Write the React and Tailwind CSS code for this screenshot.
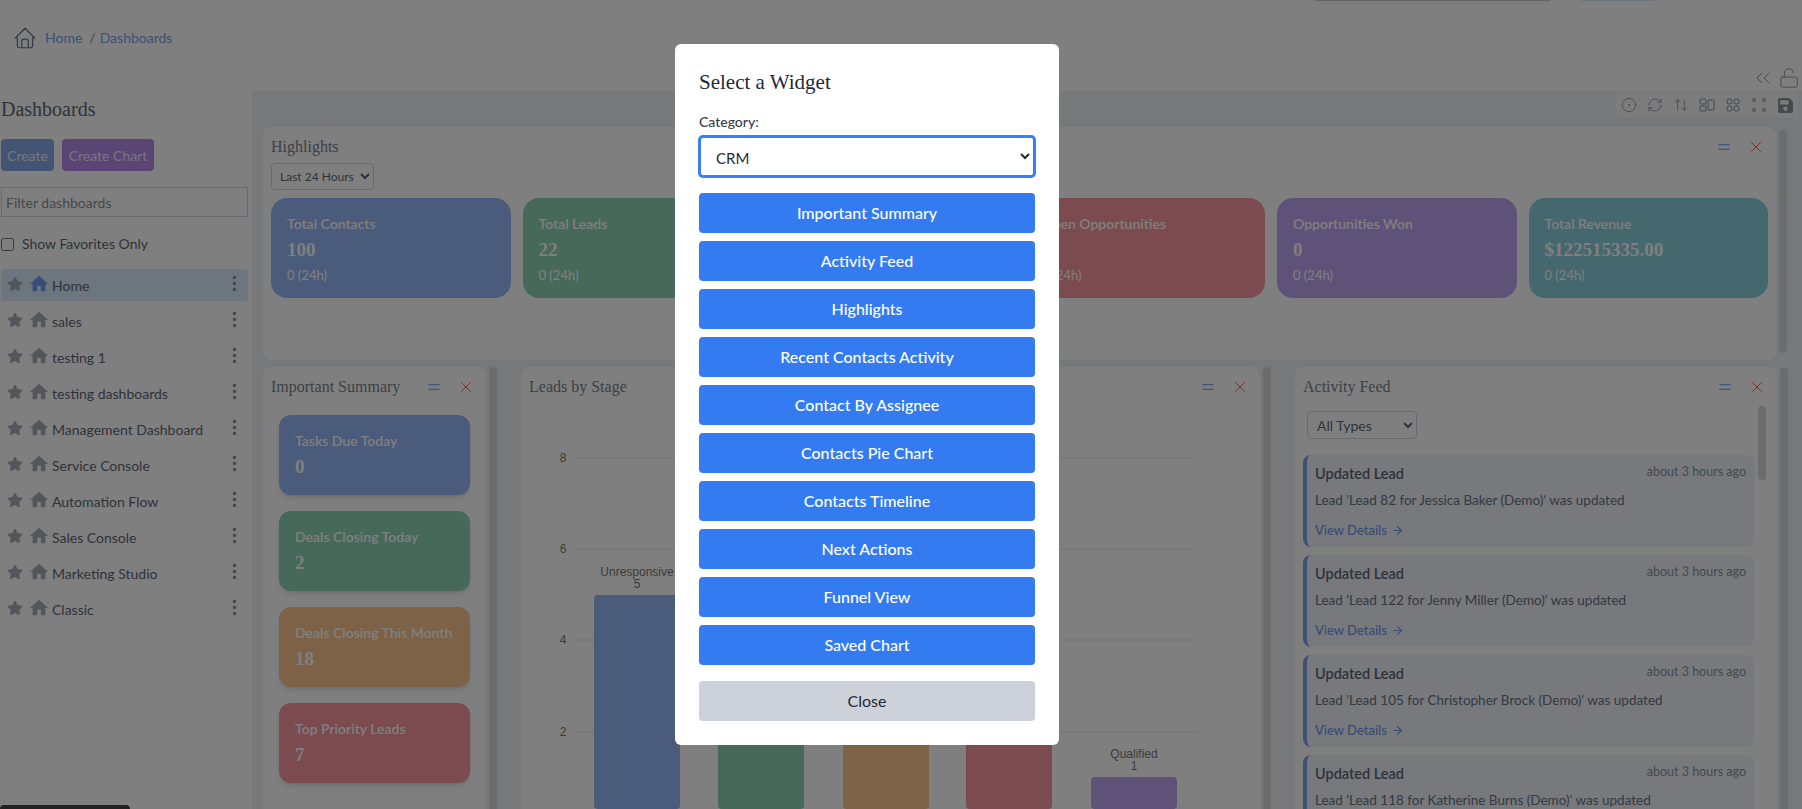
import { useState } from "react"
import {
  FaStar,
  FaSave,
} from "react-icons/fa"
import { MdHome } from "react-icons/md"
import { BsThreeDotsVertical } from "react-icons/bs"
import { TbHome } from "react-icons/tb"
import {
  LuChevronsLeft,
  LuLockOpen,
  LuCircleDot,
  LuRefreshCw,
  LuArrowUpDown,
  LuEqual,
  LuX,
  LuArrowRight,
} from "react-icons/lu"

const dashboards = [
  "Home",
  "sales",
  "testing 1",
  "testing dashboards",
  "Management Dashboard",
  "Service Console",
  "Automation Flow",
  "Sales Console",
  "Marketing Studio",
  "Classic",
]

const highlights = [
  { title: "Total Contacts", value: "100", bg: "bg-[#95b7f6]" },
  { title: "Total Leads", value: "22", bg: "bg-[#8cd2b4]" },
  { title: "Open Leads", value: "22", bg: "bg-[#fac490]" },
  { title: "Open Opportunities", value: "0", bg: "bg-[#f6969e]" },
  { title: "Opportunities Won", value: "0", bg: "bg-[#bca4f0]" },
  { title: "Total Revenue", value: "$122515335.00", bg: "bg-[#8ad0de]" },
]

const summary = [
  { title: "Tasks Due Today", value: "0", bg: "bg-[#95b7f6]" },
  { title: "Deals Closing Today", value: "2", bg: "bg-[#8cd2b4]" },
  { title: "Deals Closing This Month", value: "18", bg: "bg-[#fac490]" },
  { title: "Top Priority Leads", value: "7", bg: "bg-[#f6969e]" },
]

const feed = [
  "Lead 'Lead 82 for Jessica Baker (Demo)' was updated",
  "Lead 'Lead 122 for Jenny Miller (Demo)' was updated",
  "Lead 'Lead 105 for Christopher Brock (Demo)' was updated",
  "Lead 'Lead 118 for Katherine Burns (Demo)' was updated",
]

const widgets = [
  "Important Summary",
  "Activity Feed",
  "Highlights",
  "Recent Contacts Activity",
  "Contact By Assignee",
  "Contacts Pie Chart",
  "Contacts Timeline",
  "Next Actions",
  "Funnel View",
  "Saved Chart",
]

const serif = "font-['Liberation_Serif',serif]"

function PanelHeader({ title }) {
  return (
    <div className="flex h-9 items-center justify-between pl-2 pr-[11px] pt-[4px]">
      <h3 className={`${serif} text-[16px] text-[#7b828d]`}>{title}</h3>
      <div className="flex items-center gap-[14px]">
        <LuEqual className="text-[#5b8def]" size={18} strokeWidth={1.25} />
        <LuX className="text-[#ef5560]" size={18} strokeWidth={1.25} />
      </div>
    </div>
  )
}

function Scrollbar({ top = 3, height = 223 }) {
  return (
    <div className="w-[14px] shrink-0 pl-[3px]">
      <div className="w-2 rounded bg-[#d6d8d6]" style={{ marginTop: top, height }} />
    </div>
  )
}

function Sidebar() {
  return (
    <aside className="w-[252px] shrink-0 pl-px pr-1">
      <h2 className={`${serif} mt-[4px] text-[20px] leading-7 text-[#5f6773]`}>Dashboards</h2>
      <div className="mt-[16px] flex gap-2">
        <button className="h-8 w-[53px] rounded bg-[#86a8ea] text-[14px] text-white/80">Create</button>
        <button className="h-8 w-[92px] rounded bg-[#b58bea] text-[14px] text-white/80">Create Chart</button>
      </div>
      <input
        className="mt-4 h-[30px] w-full border border-[#d1d5db] px-1 text-[14px] placeholder:text-[#8b919b]"
        placeholder="Filter dashboards"
      />
      <label className="mt-[17px] flex items-center gap-2 text-[14px] leading-5 text-[#5f6773]">
        <input type="checkbox" className="m-0 h-[13px] w-[13px]" />
        Show Favorites Only
      </label>
      <ul className="mt-[15px] flex flex-col gap-1">
        {dashboards.map((name, i) => (
          <li
            key={name}
            className={`flex h-8 items-center rounded pl-[6px] pr-[4px] text-[14px] text-[#5f6773] ${i === 0 ? "bg-[#dbeafe]" : ""}`}
          >
            <FaStar className="-mt-[2px] text-[#a6acb5]" size={16} />
            <MdHome className={`-mt-[2px] ml-[5px] ${i === 0 ? "text-[#6f98ec]" : "text-[#a6acb5]"}`} size={22} />
            <span className="ml-[2px] flex-1 truncate">{name}</span>
            <BsThreeDotsVertical className="-mt-[3px] text-[#8b919b]" size={19} />
          </li>
        ))}
      </ul>
    </aside>
  )
}

function Toolbar() {
  let btn = "flex h-[26px] w-[26px] items-center justify-center bg-white/60 text-[#8b919b]"
  return (
    <div className="flex h-9 justify-end pr-1 pt-px">
      <div className={btn}><LuCircleDot size={16} strokeWidth={1.25} /></div>
      <div className={btn}><LuRefreshCw size={16} strokeWidth={1.25} /></div>
      <div className={btn}><LuArrowUpDown size={16} strokeWidth={1.25} /></div>
      <div className={btn}>
        <svg width="16" height="16" viewBox="0 0 16 16" fill="none" stroke="currentColor" strokeWidth="1">
          <rect x="1" y="2" width="6" height="5" rx="1" />
          <rect x="1" y="9" width="6" height="5" rx="1" />
          <rect x="9" y="3" width="6" height="10" rx="1" />
        </svg>
      </div>
      <div className={btn}>
        <svg width="16" height="16" viewBox="0 0 16 16" fill="none" stroke="currentColor" strokeWidth="1">
          <rect x="2" y="2" width="5" height="5" rx="2" />
          <rect x="9" y="2" width="5" height="5" rx="2" />
          <rect x="2" y="9" width="5" height="5" rx="2" />
          <rect x="9" y="9" width="5" height="5" rx="2" />
        </svg>
      </div>
      <div className={btn}>
        <svg width="16" height="16" viewBox="0 0 16 16" fill="none" stroke="currentColor" strokeWidth="1">
          <path d="M2 5V2h3M2 2l3 3M14 5V2h-3M14 2l-3 3M2 11v3h3M2 14l3-3M14 11v3h-3M14 14l-3-3" />
        </svg>
      </div>
      <div className={`${btn} rounded text-[#4b5563]`}><FaSave size={17} /></div>
    </div>
  )
}

function Highlights() {
  return (
    <div className="flex">
      <section className="h-[233px] w-[1513px] rounded-lg bg-white">
        <PanelHeader title="Highlights" />
        <div className="px-2">
          <select className="block h-[27px] w-[103px] rounded border border-[#d1d5db] bg-white pl-1 text-[12px] text-[#5f6773]" defaultValue="24">
            <option value="24">Last 24 Hours</option>
          </select>
          <div className="mt-2 grid grid-cols-6 gap-3">
            {highlights.map(c => (
              <div key={c.title} className={`h-[100px] rounded-2xl px-4 pt-[16px] text-white ${c.bg}`}>
                <div className="whitespace-nowrap text-[14px] font-semibold leading-5">{c.title}</div>
                <div className={`${serif} mt-[2px] text-[19px] font-bold leading-7`}>{c.value}</div>
                <div className="mt-[3px] text-[13px] leading-4">0 (24h)</div>
              </div>
            ))}
          </div>
        </div>
      </section>
      <Scrollbar />
    </div>
  )
}

function ImportantSummary() {
  return (
    <div className="flex">
      <section className="h-[500px] w-[223px] rounded-lg bg-white">
        <PanelHeader title="Important Summary" />
        <div className="mt-3 flex flex-col gap-4 px-4">
          {summary.map(c => (
            <div key={c.title} className={`h-20 rounded-xl px-4 pt-[16px] text-white shadow-md ${c.bg}`}>
              <div className="whitespace-nowrap text-[14px] font-semibold leading-5">{c.title}</div>
              <div className={`${serif} mt-[2px] text-[19px] font-bold leading-7`}>{c.value}</div>
            </div>
          ))}
        </div>
      </section>
      <Scrollbar top={0} height={500} />
    </div>
  )
}

function LeadsChart() {
  let ticks = [[8, 55], [6, 146], [4, 237], [2, 329]]
  let bars = [
    { x: 73, top: 192, fill: "#95b7f6" },
    { x: 197, top: 300, fill: "#8cd2b4" },
    { x: 322, top: 300, fill: "#fac490" },
    { x: 445, top: 300, fill: "#f6969e" },
    { x: 570, top: 374, fill: "#bca4f0" },
  ]
  return (
    <svg width="739" height="406" className="block font-['Liberation_Sans',sans-serif] text-[12px]">
      {ticks.map(([v, y]) => (
        <g key={v}>
          <line x1="54" x2="675" y1={y} y2={y} stroke="#e5e7eb" />
          <text x="42" y={y + 4} textAnchor="middle" fill="#777">{v}</text>
        </g>
      ))}
      {bars.map(b => (
        <rect key={b.x} x={b.x} y={b.top} width="86" height={406 - b.top} rx="4" fill={b.fill} />
      ))}
      <text x="116" y="173" textAnchor="middle" fill="#777">Unresponsive</text>
      <text x="116" y="185" textAnchor="middle" fill="#777">5</text>
      <text x="613" y="355" textAnchor="middle" fill="#777">Qualified</text>
      <text x="613" y="367" textAnchor="middle" fill="#777">1</text>
    </svg>
  )
}

function LeadsByStage() {
  return (
    <div className="flex">
      <section className="h-[500px] w-[739px] overflow-hidden rounded-lg bg-white">
        <PanelHeader title="Leads by Stage" />
        <LeadsChart />
      </section>
      <Scrollbar top={0} height={500} />
    </div>
  )
}

function ActivityFeed() {
  return (
    <div className="flex">
      <section className="h-[500px] w-[482px] rounded-lg bg-white">
        <PanelHeader title="Activity Feed" />
        <div className="flex pl-2">
          <div className="w-[451px] shrink-0">
            <select className="ml-1 mt-2 block h-7 w-[110px] rounded border border-[#d1d5db] bg-white pl-[5px] text-[14px] text-[#5f6773]" defaultValue="all">
              <option value="all">All Types</option>
            </select>
            <div className="mt-4 flex flex-col gap-2">
              {feed.map(text => (
                <div key={text} className="h-[92px] rounded-lg border-l-4 border-[#7ba2ee] bg-[#eef3fb] pl-2 pr-2 pt-[9px]">
                  <div className="flex items-start justify-between">
                    <span className="text-[14.5px] font-semibold leading-5 text-[#5f6773]">Updated Lead</span>
                    <span className="text-[12.5px] leading-4 text-[#8b919b]">about 3 hours ago</span>
                  </div>
                  <p className="mt-[6px] text-[13.5px] leading-5 text-[#6b7280]">{text}</p>
                  <div className="mt-[12px] flex items-center gap-1 text-[13px] font-medium leading-4 text-[#6f98ec]">
                    View Details <LuArrowRight size={13} />
                  </div>
                </div>
              ))}
            </div>
          </div>
          <div className="ml-1 mt-[3px] h-[74px] w-2 rounded bg-[#d6d8d6]" />
        </div>
      </section>
      <Scrollbar top={0} height={500} />
    </div>
  )
}

function WidgetModal() {
  let [category, setCategory] = useState("crm")
  return (
    <div className="fixed inset-0 z-10 bg-black/50 pl-[675px] pt-[44px]">
      <div className="w-[384px] rounded-md bg-white p-6">
        <h2 className={`${serif} text-[21px] leading-7 text-[#1f2937]`}>Select a Widget</h2>
        <label className="mt-4 block text-[14px] font-medium leading-5 text-[#374151]">Category:</label>
        <select
          value={category}
          onChange={e => setCategory(e.target.value)}
          className="mt-1 block h-[41px] w-full rounded border-2 border-[#3b7ff0] bg-white pl-[11px] pt-[2px] text-[15px] text-[#1f2937] ring-1 ring-[#3b7ff0]"
        >
          <option value="crm">CRM</option>
        </select>
        <div className="mt-4 flex flex-col gap-2">
          {widgets.map(w => (
            <button key={w} className="h-10 rounded bg-[#347bf1] text-[16px] font-medium text-white">{w}</button>
          ))}
        </div>
        <button className="mt-4 h-10 w-full rounded bg-[#cdd2da] text-[16px] text-[#1f2937]">Close</button>
      </div>
    </div>
  )
}

export default function App() {
  return (
    <div className="relative h-[809px] overflow-hidden bg-white font-['Lato',sans-serif]">
      <div className="flex h-px pl-[1315px]">
        <div className="h-px w-[235px] bg-[#c9ccd1] shadow" />
        <div className="ml-[30px] h-px w-[75px] bg-[#dbeafe]" />
      </div>
      <div className="flex h-[64px] items-center pl-[12px] pt-[9px] text-[14px]">
        <TbHome className="text-[#6b7280]" size={26} strokeWidth={1.1} />
        <a className="ml-[7px] text-[#7ba2ee]">Home</a>
        <span className="ml-[7px] text-[#8b919b]">/</span>
        <a className="ml-[4px] text-[#7ba2ee]">Dashboards</a>
      </div>
      <div className="flex h-[26px] justify-end">
        <div className="flex h-[26px] w-[26px] items-center justify-center text-[#8b919b]"><LuChevronsLeft size={24} strokeWidth={1} /></div>
        <div className="flex h-[26px] w-[26px] items-center justify-center text-[#8b919b]"><LuLockOpen size={22} strokeWidth={1} /></div>
      </div>
      <div className="flex">
        <Sidebar />
        <main className="h-[718px] flex-1 bg-[#eff0f3] pl-[11px]">
          <Toolbar />
          <Highlights />
          <div className="mt-[7px] flex gap-[21px]">
            <ImportantSummary />
            <LeadsByStage />
            <ActivityFeed />
          </div>
        </main>
      </div>
      <WidgetModal />
      <div className="absolute bottom-0 left-0 z-20 h-1 w-[130px] rounded-t bg-[#222]" />
    </div>
  )
}
